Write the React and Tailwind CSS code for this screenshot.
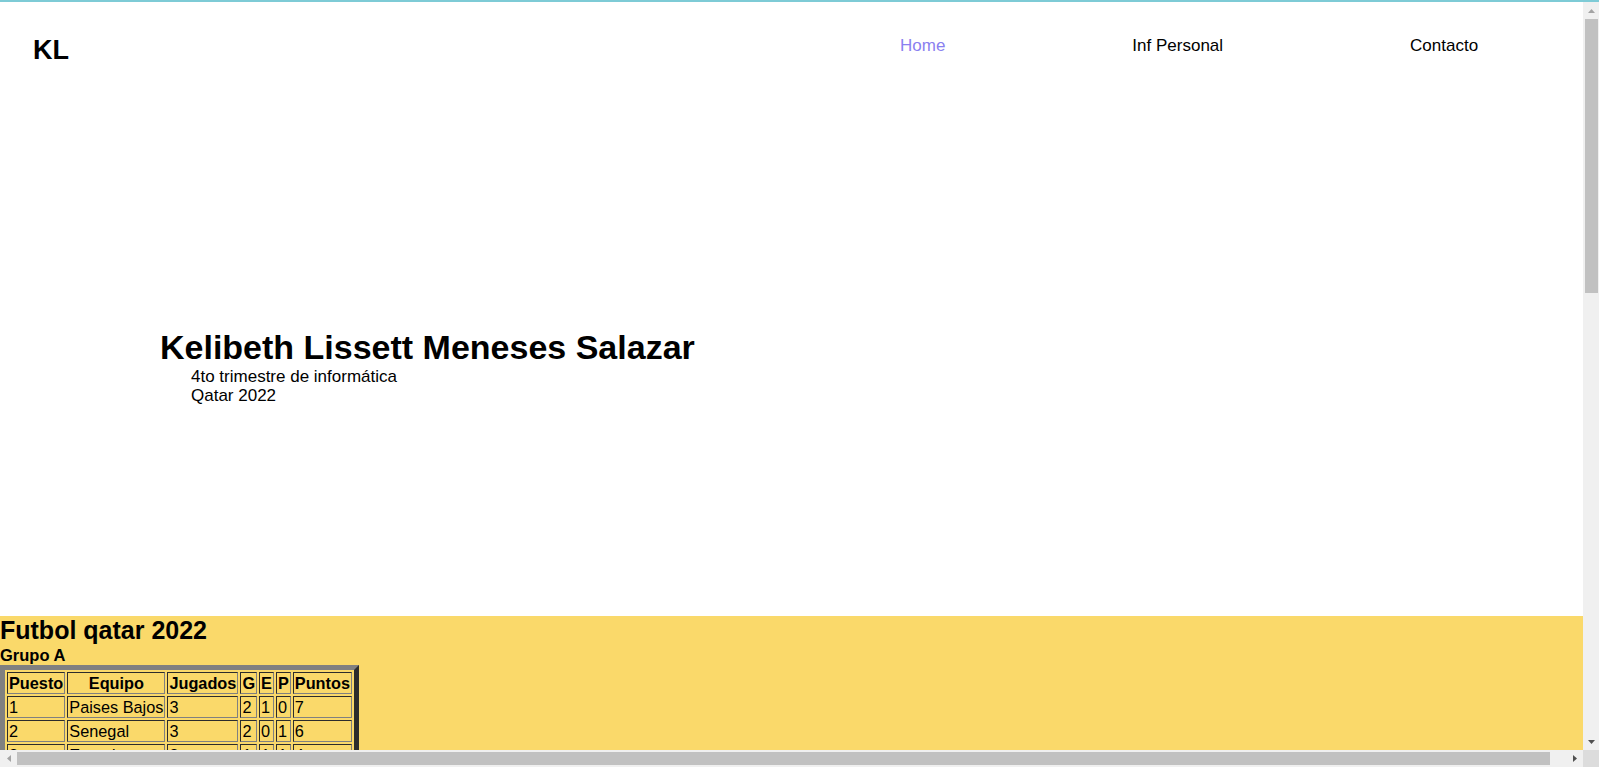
import React from 'react';

const grupos = [
    { nombre: 'Grupo A', equipos: [['1', 'Paises Bajos', '3', '2', '1', '0', '7'], ['2', 'Senegal', '3', '2', '0', '1', '6'], ['3', 'Ecuador', '3', '1', '1', '1', '4'], ['4', 'Qatar', '3', '0', '0', '3', '0']] },
    { nombre: 'Grupo B', equipos: [['1', 'Inglaterra', '3', '2', '1', '0', '7'], ['2', 'Estados Unidos', '3', '1', '2', '0', '5'], ['3', 'Irán', '3', '1', '0', '2', '3'], ['4', 'Gales', '3', '0', '1', '2', '1']] },
    { nombre: 'Grupo C', equipos: [['1', 'Argentina', '3', '2', '0', '1', '6'], ['2', 'Polonia', '3', '1', '1', '1', '4'], ['3', 'México', '3', '1', '1', '1', '4'], ['4', 'Arabia Saudita', '3', '1', '0', '2', '3']] },
    { nombre: 'Grupo D', equipos: [['1', 'Francia', '3', '2', '0', '1', '6'], ['2', 'Australia', '3', '2', '0', '1', '6'], ['3', 'Túnez', '3', '1', '1', '1', '4'], ['4', 'Dinamarca', '3', '0', '1', '2', '1']] },
];

const columnas = ['Puesto', 'Equipo', 'Jugados', 'G', 'E', 'P', 'Puntos'];

const celda = 'border border-[#808080] [--tw-border-style:inset] [border-style:inset] p-[1px]';

const Flecha = ({ dir, color }) => {
    const puntos = {
        up: '0,4 3.5,0 7,4',
        down: '0,0 7,0 3.5,4',
        left: '4,0 4,7 0,3.5',
        right: '0,0 0,7 4,3.5',
    }[dir];
    const vertical = dir === 'up' || dir === 'down';
    return (
        <svg width={vertical ? 7 : 4} height={vertical ? 4 : 7} viewBox={vertical ? '0 0 7 4' : '0 0 4 7'}>
            <polygon points={puntos} fill={color} />
        </svg>
    );
};

const TablaGrupo = ({ grupo }) => (
    <div>
        <h4 className="text-[16.5px] font-bold leading-[20px]">{grupo.nombre}</h4>
        <table className="border-separate border-spacing-[2px] border-[5px] border-[#808080] [--tw-border-style:outset] [border-style:outset] text-[16.3px] leading-[18px]">
            <thead>
                <tr>
                    {columnas.map((col) => (
                        <th key={col} className={`${celda} font-bold text-center`}>
                            {col}
                        </th>
                    ))}
                </tr>
            </thead>
            <tbody>
                {grupo.equipos.map((fila) => (
                    <tr key={fila[1]}>
                        {fila.map((valor, i) => (
                            <td key={i} className={`${celda} text-left`}>
                                {valor}
                            </td>
                        ))}
                    </tr>
                ))}
            </tbody>
        </table>
    </div>
);

const App = () => {
    return (
        <div className="h-screen flex flex-col overflow-hidden font-['Liberation_Sans',Arial,sans-serif] text-black bg-white">
            <div className="h-[2px] shrink-0 bg-[#7ecbd6]" />

            <div className="flex flex-1 min-h-0">
                <main className="flex-1 min-w-0 overflow-hidden">
                    {/* cabecera */}
                    <header className="flex items-start h-[98px]">
                        <div className="w-[900px] shrink-0 pl-[33px] pt-[33px] text-[27px] font-bold leading-[31px]">KL</div>
                        <nav className="flex gap-[187px] pt-[34px] text-[17px] leading-[20px] whitespace-nowrap">
                            <a href="#" className="text-[#8a7ff0]">Home</a>
                            <a href="#">Inf Personal</a>
                            <a href="#">Contacto</a>
                        </nav>
                    </header>

                    {/* portada */}
                    <section className="h-[516px] pt-[228px] pl-[160px]">
                        <h1 className="text-[34px] font-bold leading-[39px]">Kelibeth Lissett Meneses Salazar</h1>
                        <div className="pl-[31px] text-[17px] leading-[19.4px]">
                            <p>4to trimestre de informática</p>
                            <p>Qatar 2022</p>
                        </div>
                    </section>

                    {/* tablas */}
                    <section className="bg-[#fad96a] pb-[96px]">
                        <h2 className="text-[25px] font-bold leading-[29px]">Futbol qatar 2022</h2>
                        {grupos.map((g) => (
                            <TablaGrupo key={g.nombre} grupo={g} />
                        ))}
                    </section>
                </main>

                {/* barra vertical */}
                <div className="w-[16px] shrink-0 flex flex-col bg-[#f0f0f0]">
                    <div className="h-[17px] flex items-center justify-center">
                        <Flecha dir="up" color="#a3a3a3" />
                    </div>
                    <div className="h-[274px] ml-[2px] w-[13px] bg-[#c1c1c1]" />
                    <div className="flex-1" />
                    <div className="h-[17px] flex items-center justify-center">
                        <Flecha dir="down" color="#505050" />
                    </div>
                </div>
            </div>

            {/* barra horizontal */}
            <div className="h-[17px] shrink-0 flex">
                <div className="flex-1 flex bg-[#f0f0f0]">
                    <div className="w-[17px] flex items-center justify-center">
                        <Flecha dir="left" color="#a3a3a3" />
                    </div>
                    <div className="w-[1533px] mt-[2px] h-[13px] bg-[#c1c1c1]" />
                    <div className="flex-1" />
                    <div className="w-[17px] flex items-center justify-center">
                        <Flecha dir="right" color="#505050" />
                    </div>
                </div>
                <div className="w-[16px] bg-[#dcdcdc]" />
            </div>
        </div>
    );
};

export default App;
